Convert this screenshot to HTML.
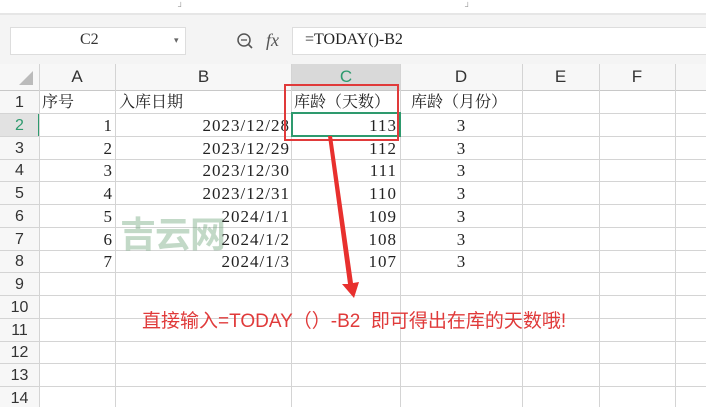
<!DOCTYPE html>
<html><head><meta charset="utf-8"><style>
*{margin:0;padding:0;box-sizing:border-box}
body{width:706px;height:407px;overflow:hidden;background:#fff;position:relative;font-family:"Liberation Serif","Noto Serif CJK SC",serif;color:#222}
.a{position:absolute}
.hl{position:absolute;left:0;width:706px;height:1px;background:#d4d4d4}
.vl{position:absolute;top:64px;height:343px;width:1px;background:#d4d4d4}
.rn{position:absolute;left:0;width:39px;text-align:center;font-family:"Liberation Sans",sans-serif;font-size:16px;color:#333;height:23px;line-height:23px}
.c{position:absolute;height:23px;line-height:23px;font-size:16px;white-space:nowrap}
.r{text-align:right;font-size:17px;letter-spacing:1px}
.ch{position:absolute;top:64px;height:26px;line-height:26px;text-align:center;font-family:"Liberation Sans",sans-serif;font-size:17px;color:#333}
</style></head><body>
<div class="a" style="left:0;top:0;width:706px;height:14px;background:#fff"></div>
<div class="a" style="left:0;top:13px;width:706px;height:2px;background:#e6e6e6"></div>
<div class="a" style="left:0;top:15px;width:706px;height:49px;background:#f4f4f4"></div>
<div class="a" style="left:178px;top:2px;font-size:8px;color:#999">┘</div>
<div class="a" style="left:465px;top:2px;font-size:8px;color:#999">┘</div>
<div class="a" style="left:10px;top:27px;width:176px;height:28px;background:#fff;border:1px solid #ddd"></div>
<div class="a" style="left:80px;top:31px;font-size:16px;color:#333">C2</div>
<div class="a" style="left:174px;top:35px;font-size:9px;color:#666">▾</div>
<svg class="a" style="left:236px;top:32px" width="18" height="18"><circle cx="8" cy="8" r="6" fill="none" stroke="#555" stroke-width="1.5"/><line x1="12" y1="12" x2="16" y2="16" stroke="#555" stroke-width="1.6"/><line x1="5" y1="8" x2="11" y2="8" stroke="#555" stroke-width="1.3"/></svg>
<div class="a" style="left:266px;top:30px;font-size:18px;font-style:italic;color:#555">fx</div>
<div class="a" style="left:292px;top:27px;width:414px;height:28px;background:#fff;border:1px solid #ddd;border-right:none"></div>
<div class="a" style="left:305px;top:31px;font-size:16px;color:#222">=TODAY()-B2</div>
<div class="a" style="left:0;top:64px;width:706px;height:26px;background:#f7f7f7"></div>
<div class="a" style="left:0;top:90px;width:39px;height:317px;background:#f7f7f7"></div>
<div class="a" style="left:292px;top:64px;width:108px;height:26px;background:#d9d9d9"></div>
<div class="a" style="left:0;top:113px;width:39px;height:23px;background:#e2e2e2"></div>
<div class="a" style="left:38px;top:113px;width:2px;height:23px;background:#2e9a6e"></div>
<svg class="a" style="left:18px;top:70px" width="16" height="16"><polygon points="15,1 15,15 1,15" fill="#bbb"/></svg>
<div class="ch" style="left:39px;width:76px">A</div>
<div class="ch" style="left:115px;width:177px">B</div>
<div class="ch" style="left:292px;width:108px;color:#2e9a6e">C</div>
<div class="ch" style="left:400px;width:122px">D</div>
<div class="ch" style="left:522px;width:77px">E</div>
<div class="ch" style="left:599px;width:76px">F</div>
<div class="hl" style="top:90px;background:#c8c8c8"></div>
<div class="hl" style="top:113px"></div><div class="hl" style="top:136px"></div><div class="hl" style="top:159px"></div><div class="hl" style="top:181px"></div><div class="hl" style="top:204px"></div><div class="hl" style="top:227px"></div><div class="hl" style="top:250px"></div><div class="hl" style="top:272px"></div><div class="hl" style="top:295px"></div><div class="hl" style="top:318px"></div><div class="hl" style="top:341px"></div><div class="hl" style="top:363px"></div><div class="hl" style="top:386px"></div>
<div class="vl" style="left:39px"></div><div class="vl" style="left:115px"></div><div class="vl" style="left:291px"></div><div class="vl" style="left:400px"></div><div class="vl" style="left:522px"></div><div class="vl" style="left:599px"></div><div class="vl" style="left:675px"></div>
<div class="rn" style="top:91px">1</div><div class="rn" style="top:114px;color:#2e9a6e">2</div><div class="rn" style="top:137px">3</div><div class="rn" style="top:159px">4</div><div class="rn" style="top:182px">5</div><div class="rn" style="top:205px">6</div><div class="rn" style="top:228px">7</div><div class="rn" style="top:250px">8</div><div class="rn" style="top:273px">9</div><div class="rn" style="top:296px">10</div><div class="rn" style="top:319px">11</div><div class="rn" style="top:341px">12</div><div class="rn" style="top:364px">13</div><div class="rn" style="top:387px">14</div>
<div class="c" style="left:42px;top:91px">序号</div>
<div class="c" style="left:119px;top:91px">入库日期</div>
<div class="c" style="left:294px;top:91px">库龄（天数）</div>
<div class="c" style="left:411px;top:91px">库龄（月份）</div>
<div class="a" style="left:120px;top:206px;font-family:'Noto Sans CJK SC',sans-serif;font-size:36px;font-weight:bold;color:rgba(120,170,130,0.45);letter-spacing:-1px">吉云网</div>
<div class="c r" style="left:40px;width:73px;top:114px">1</div><div class="c r" style="left:116px;width:174px;top:114px">2023/12/28</div><div class="c r" style="left:292px;width:105px;top:114px">113</div><div class="c" style="left:400px;width:122px;text-align:center;top:114px;font-size:17px">3</div>
<div class="c r" style="left:40px;width:73px;top:137px">2</div><div class="c r" style="left:116px;width:174px;top:137px">2023/12/29</div><div class="c r" style="left:292px;width:105px;top:137px">112</div><div class="c" style="left:400px;width:122px;text-align:center;top:137px;font-size:17px">3</div>
<div class="c r" style="left:40px;width:73px;top:159px">3</div><div class="c r" style="left:116px;width:174px;top:159px">2023/12/30</div><div class="c r" style="left:292px;width:105px;top:159px">111</div><div class="c" style="left:400px;width:122px;text-align:center;top:159px;font-size:17px">3</div>
<div class="c r" style="left:40px;width:73px;top:182px">4</div><div class="c r" style="left:116px;width:174px;top:182px">2023/12/31</div><div class="c r" style="left:292px;width:105px;top:182px">110</div><div class="c" style="left:400px;width:122px;text-align:center;top:182px;font-size:17px">3</div>
<div class="c r" style="left:40px;width:73px;top:205px">5</div><div class="c r" style="left:116px;width:174px;top:205px">2024/1/1</div><div class="c r" style="left:292px;width:105px;top:205px">109</div><div class="c" style="left:400px;width:122px;text-align:center;top:205px;font-size:17px">3</div>
<div class="c r" style="left:40px;width:73px;top:228px">6</div><div class="c r" style="left:116px;width:174px;top:228px">2024/1/2</div><div class="c r" style="left:292px;width:105px;top:228px">108</div><div class="c" style="left:400px;width:122px;text-align:center;top:228px;font-size:17px">3</div>
<div class="c r" style="left:40px;width:73px;top:250px">7</div><div class="c r" style="left:116px;width:174px;top:250px">2024/1/3</div><div class="c r" style="left:292px;width:105px;top:250px">107</div><div class="c" style="left:400px;width:122px;text-align:center;top:250px;font-size:17px">3</div>
<div class="a" style="left:291px;top:112px;width:110px;height:25px;border:2px solid #2e9a6e"></div>
<div class="a" style="left:284px;top:84px;width:115px;height:57px;border:2.5px solid #e03a3a"></div>
<svg class="a" style="left:0;top:0" width="706" height="407"><polygon points="328,136 332,136 353,283 359,282 354,298 342,284 348,284" fill="#e8302e"/></svg>
<div class="a" style="left:142px;top:306px;font-family:'Liberation Sans','Noto Sans CJK SC',sans-serif;font-size:19px;color:#e03a3a;white-space:nowrap">直接输入=TODAY（）-B2 &nbsp;即可得出在库的天数哦!</div>
</body></html>
